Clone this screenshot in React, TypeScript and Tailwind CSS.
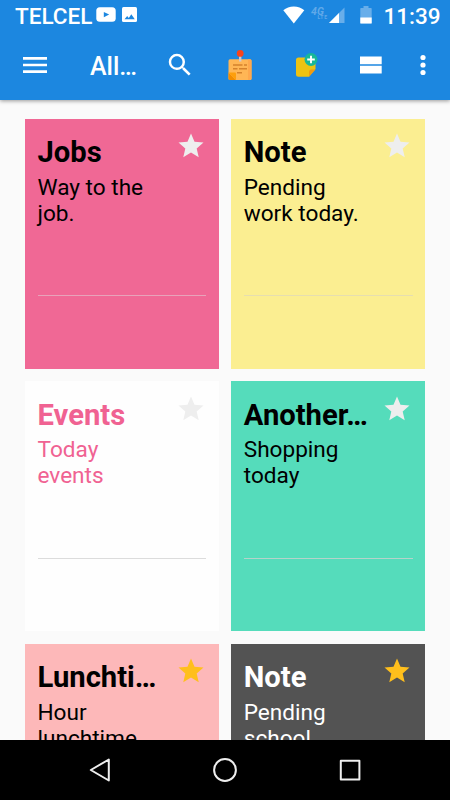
import React from 'react';
import { MdMenu, MdSearch, MdStar } from 'react-icons/md';

const StatusBar = () => (
  <div className="flex h-[33px] pl-[15px] pr-[10.5px] text-[22.5px] leading-[33px] font-medium">
    <span className="w-[80.5px] whitespace-nowrap">TELCEL</span>

    {/* Notification icons */}
    <svg className="mt-[7px] h-[15px] w-[20px]" viewBox="0 0 20 15">
      <rect x=".3" y=".3" width="19.400" height="14.400" rx="3.500" fill="#fff" />
      <path d="M7.800 4.900v5.400l5.400-2.700z" fill="#1c87e0" />
    </svg>
    <svg className="ml-[6.5px] mt-[7px] h-[15px] w-[15px]" viewBox="0 0 15 15">
      <rect width="15" height="15" rx="1.500" fill="#fff" />
      <path d="M2.500 12.300l2.700-3.300 1.600 1.900 2.500-3.700 3.500 5.100z" fill="#1c87e0" />
    </svg>

    {/* System icons */}
    <svg className="ml-auto mt-[6px] h-[18px] w-[22px]" viewBox="0 0 22 18">
      <path d="M0.3 4.200C3 1.900 6.800.5 10.800.5s7.800 1.400 10.500 3.700L10.800 17.500z" fill="#fff" />
    </svg>
    <svg className="ml-[6px] mt-[5px] h-[16px] w-[17px]" viewBox="0 0 17 16" fill="#60a9e9">
      <text x="0" y="9.500" fontFamily="Roboto" fontSize="10.500" fontWeight="700" fontStyle="italic" textLength="13">4G</text>
      <text x="6.500" y="13.500" fontFamily="Roboto" fontSize="5" fontWeight="700" textLength="9.500">LTE</text>
    </svg>
    <svg className="ml-[1px] mt-[7px] h-[16px] w-[16px]" viewBox="0 0 16 16">
      <path d="M0 16L15.500 .5V16z" fill="#68aeea" />
      <path d="M0 16L10 6v10z" fill="#fff" />
    </svg>
    <svg className="ml-[15px] mt-[6px] h-[18px] w-[12px]" viewBox="0 0 12 18">
      <path d="M3.500 0h5v2H11a.7.7 0 01.7.7v14.200a.7.7 0 01-.7.7H1a.7.7 0 01-.7-.7V2.700A.7.7 0 011 2h2.500z" fill="#68aeea" />
      <path d="M.3 11.500h11.400v5.400a.7.7 0 01-.7.7H1a.7.7 0 01-.7-.7z" fill="#fff" />
    </svg>
    <span className="ml-[11.5px] w-[56px] whitespace-nowrap">11:39</span>
  </div>
);

const Toolbar = () => (
  <div className="flex h-[64px] items-center pl-[19px] pr-[24.500px]">
    <MdMenu className="h-8 w-8" />
    <h1 className="ml-[39px] mt-[3px] w-[50px] whitespace-nowrap text-[25px] font-medium">All…</h1>
    <MdSearch className="ml-[25px] h-[30px] w-[30px]" />

    {/* Pinned note */}
    <svg className="ml-[32.5px] h-[32px] w-[25px]" viewBox="0 0 25 32">
      <rect x=".5" y="10.300" width="23" height="20.700" rx="1.500" fill="#ffb655" />
      <path d="M20 10.300h2a1.500 1.500 0 011.500 1.500v17.700a1.500 1.500 0 01-1.500 1.500h-2z" fill="#fea84d" />
      <path d="M.5 23.500l7.500 7.500H2a1.500 1.500 0 01-1.500-1.500z" fill="#f28c00" />
      <path d="M.5 23.500H7a1 1 0 011 1V31z" fill="#fe9f0c" />
      <path d="M5 15.900h9.500M16 15.900h3M5 19.800h4.500M11 19.800h8M9 23.800h5" stroke="#d5822c" strokeWidth="1.500" />
      <path d="M12.200 7v5.500" stroke="#d2c8cf" strokeWidth="2.400" />
      <circle cx="12.200" cy="4.400" r="3.400" fill="#f8441c" />
    </svg>

    {/* New note */}
    <svg className="ml-[42px] h-[26px] w-[24px]" viewBox="0 0 24 26">
      <path d="M3.500 5.500h17v11.500L14 24.800H3.500a2.500 2.500 0 01-2.500-2.500V8a2.500 2.500 0 012.500-2.500z" fill="#ecc313" />
      <path d="M20.500 17.500L14 24.800V20a2.500 2.500 0 012.500-2.500z" fill="#ee9b12" />
      <circle cx="16" cy="7.500" r="6.500" fill="#17b898" />
      <path d="M16 3.700v7.600M12.200 7.500h7.600" stroke="#fff" strokeWidth="1.900" />
    </svg>

    <svg className="ml-[41px] h-[18px] w-[22px]" viewBox="0 0 22 18" fill="#fff">
      <path d="M0 .5h21.700v7.700H0zM0 9.800h21.700v7.700H0z" />
    </svg>
    <svg className="ml-auto h-[22px] w-[6px]" viewBox="0 0 6 22" fill="#fff">
      <circle cx="3" cy="3.500" r="2.600" />
      <circle cx="3" cy="11" r="2.600" />
      <circle cx="3" cy="18.500" r="2.600" />
    </svg>
  </div>
);

const notes = [
  { title: 'Jobs', body: 'Way to the job.', color: 'bg-[#f06895] text-black', line: 'bg-[#e8a3ba]', starred: false },
  { title: 'Note', body: 'Pending work today.', color: 'bg-[#fbee91] text-black', line: 'bg-[#e6deb0]', starred: false },
  { title: 'Events', body: 'Today events', color: 'bg-[#fefefe] text-[#f06292]', line: 'bg-[#dcdcdc]', starred: false },
  { title: 'Another…', body: 'Shopping today', color: 'bg-[#55dcbb] text-black', line: 'bg-[#b5d3ca]', starred: false },
  { title: 'Lunchti…', body: 'Hour lunchtime', color: 'bg-[#fdb8b9] text-black', line: 'bg-[#eec4c4]', starred: true },
  { title: 'Note', body: 'Pending school', color: 'bg-[#535353] text-white', line: 'bg-[#8a8a8a]', starred: true },
];

const NoteCard = ({ note }: { note: (typeof notes)[number] }) => (
  <article className={`h-[250px] pt-[12.5px] pl-[12.5px] pr-[12.5px] ${note.color}`}>
    <div className="flex">
      <div className="h-[163.7px] w-[126px]">
        <h2 className="whitespace-nowrap text-[29.2px] leading-[42px] font-bold">{note.title}</h2>
        <p className="mt-[1.2px] w-[118px] text-[22.6px] leading-[26.3px]">{note.body}</p>
      </div>
      <MdStar
        className={`ml-[12.7px] h-[30px] w-[30px] shrink-0 ${note.starred ? 'text-[#ffbf1c]' : 'text-[#eeeeee]'}`}
      />
    </div>
    <div className={`h-px ${note.line}`} />
  </article>
);

const NavBar = () => (
  <nav className="flex h-[60px] items-center justify-between bg-black pl-[88px] pr-[88px]">
    <svg className="h-[26px] w-[24px]" viewBox="0 0 24 26" fill="none" stroke="#eee" strokeWidth="2" strokeLinejoin="round">
      <path d="M2.800 13L20.800 2.500v21z" />
    </svg>
    <svg className="h-[26px] w-[26px]" viewBox="0 0 26 26" fill="none" stroke="#eee" strokeWidth="2">
      <circle cx="13" cy="13" r="10.900" />
    </svg>
    <svg className="h-[26px] w-[24px]" viewBox="0 0 24 26" fill="none" stroke="#eee" strokeWidth="2" strokeLinejoin="round">
      <path d="M2.800 3.800h18.600v18.600H2.800z" />
    </svg>
  </nav>
);

const App = () => {
  return (
    <div className="flex h-[800px] w-[450px] flex-col overflow-hidden bg-[#fafafa] font-[Roboto,sans-serif]">
      <header className="z-10 h-[100px] shrink-0 bg-[#1c87e0] text-white shadow-[0_1px_4px_rgba(0,0,0,0.4)]">
        <StatusBar />
        <Toolbar />
      </header>

      {/* Notes grid */}
      <main className="min-h-0 flex-1 overflow-hidden pt-[18.9px] pl-[25px] pr-[25px]">
        <div className="grid grid-cols-2 gap-[12.5px]">
          {notes.map((note, index) => (
            <NoteCard key={index} note={note} />
          ))}
        </div>
      </main>

      <NavBar />
    </div>
  );
};

export default App;
